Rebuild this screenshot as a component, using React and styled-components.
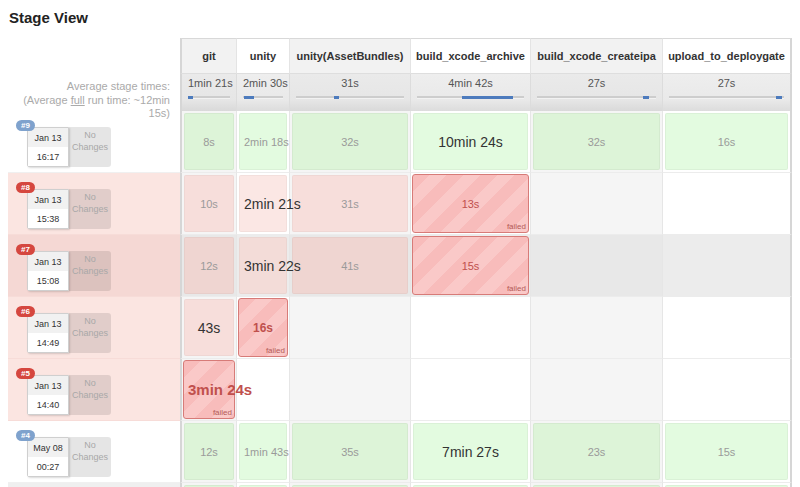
import styled, { createGlobalStyle } from "styled-components";

const GlobalStyle = createGlobalStyle`
  body {
    margin: 0;
    background: #fff;
    font-family: "Liberation Sans", Arial, sans-serif;
    color: #333;
    overflow: hidden;
  }
`;

const COLS = "172px 56px 53px 121px 120px 132px 130px";

const stages = [
  { name: "git", avg: "1min 21s", from: 0, width: 13 },
  { name: "unity", avg: "2min 30s", from: 3, width: 25 },
  { name: "unity(AssetBundles)", avg: "31s", from: 35, width: 5 },
  { name: "build_xcode_archive", avg: "4min 42s", from: 42, width: 48 },
  { name: "build_xcode_createipa", avg: "27s", from: 89, width: 5 },
  { name: "upload_to_deploygate", avg: "27s", from: 93, width: 5 },
];

const builds = [
  {
    id: 9, date: "Jan 13", time: "16:17", status: "ok",
    cells: [{ t: "8s" }, { t: "2min 18s" }, { t: "32s" }, { t: "10min 24s", size: 14 }, { t: "32s" }, { t: "16s" }],
  },
  {
    id: 8, date: "Jan 13", time: "15:38", status: "fail",
    cells: [{ t: "10s" }, { t: "2min 21s", size: 14 }, { t: "31s" }, { t: "13s", fail: true }, null, null],
  },
  {
    id: 7, date: "Jan 13", time: "15:08", status: "fail", hover: true,
    cells: [{ t: "12s" }, { t: "3min 22s", size: 14 }, { t: "41s" }, { t: "15s", fail: true }, null, null],
  },
  {
    id: 6, date: "Jan 13", time: "14:49", status: "fail",
    cells: [{ t: "43s", size: 14 }, { t: "16s", fail: true, size: 12 }, null, null, null, null],
  },
  {
    id: 5, date: "Jan 13", time: "14:40", status: "fail",
    cells: [{ t: "3min 24s", fail: true, size: 15 }, null, null, null, null, null],
  },
  {
    id: 4, date: "May 08", time: "00:27", status: "ok",
    cells: [{ t: "12s" }, { t: "1min 43s" }, { t: "35s" }, { t: "7min 27s", size: 14 }, { t: "23s" }, { t: "15s" }],
  },
];

// the next build row only peeks in at the bottom edge
const nextRow = [1, 2, 3, 4, 5, 6];

const isGray = (col) => col % 2 === 0;

const colBg = (col, hover) => {
  if (hover) return isGray(col) ? "#e8e8e8" : "#ececec";
  return isGray(col) ? "#f5f5f5" : "#ffffff";
};

const boxBg = (kind, col, hover) => {
  if (kind === "ok") return isGray(col) ? "#ddf4d8" : "#e3fbe0";
  if (kind === "okf") {
    if (hover) return isGray(col) ? "#efd5d1" : "#f3dcd8";
    return isGray(col) ? "#f7dedb" : "#fbe7e4";
  }
  return "transparent";
};

const Page = styled.div`
  width: 800px;
  height: 487px;
  overflow: hidden;
`;

const Title = styled.h2`
  margin: 9px 0 0 9px;
  font-size: 15px;
  line-height: 18px;
  font-weight: bold;
  color: #222;
`;

const Table = styled.div`
  margin: 11px 0 0 8px;
`;

const Row = styled.div`
  display: grid;
  grid-template-columns: ${COLS};
`;

const Blank = styled.div`
  background: #fff;
`;

const HeadCell = styled.div`
  height: 36px;
  box-sizing: border-box;
  display: flex;
  align-items: center;
  justify-content: center;
  font-size: 11px;
  font-weight: bold;
  color: #333;
  white-space: nowrap;
  background: ${(p) => (isGray(p.$col) ? "#f2f2f2" : "#fff")};
  border-top: 1px solid #d8d8d8;
  border-left: ${(p) => (p.$col === 0 ? "2px solid #d6d6d6" : "1px solid #e4e4e4")};
  border-right: ${(p) => (p.$col === 5 ? "2px solid #d6d6d6" : "none")};
  border-bottom: 1px solid #dedede;
`;

const AvgLabel = styled.div`
  position: relative;
  z-index: 1;
  height: 37px;
  box-sizing: border-box;
  padding: 6px 10px 0 0;
  text-align: right;
  font-size: 11px;
  line-height: 13.5px;
  color: #aaa;

  u {
    text-decoration: underline;
  }
`;

const AvgCell = styled.div`
  height: 37px;
  box-sizing: border-box;
  padding: 3px 6px 0;
  text-align: center;
  white-space: nowrap;
  font-size: 11px;
  line-height: 13px;
  color: #555;
  background: ${(p) =>
    isGray(p.$col)
      ? "linear-gradient(#eaeaea, #e6e6e6 70%, #d9d9d9)"
      : "linear-gradient(#eeeeee, #e9e9e9 70%, #dcdcdc)"};
  border-left: ${(p) => (p.$col === 0 ? "2px solid #d6d6d6" : "1px solid #dcdcdc")};
  border-right: ${(p) => (p.$col === 5 ? "2px solid #d6d6d6" : "none")};
`;

const Track = styled.div`
  display: flex;
  align-items: center;
  height: 2px;
  margin-top: 6px;
  background: #cdcdcd;
  border-bottom: 1px solid #f2f2f2;
`;

const Fill = styled.div`
  height: 3px;
  margin-left: ${(p) => p.$from}%;
  width: ${(p) => p.$width}%;
  background: #4d7bbd;
`;

const BuildCell = styled.div`
  height: 62px;
  box-sizing: border-box;
  padding: 16px 0 0 19px;
  background: ${(p) =>
    p.$status === "fail" ? (p.$hover ? "#f5d8d4" : "#fbe5e1") : p.$status === "next" ? "#efefef" : "#fff"};
  border-bottom: 1px solid ${(p) => (p.$status === "fail" ? "#f7dcd8" : "#f0f0f0")};
`;

const Card = styled.div`
  position: relative;
  display: flex;
  width: 84px;
  height: 40px;
`;

const Badge = styled.span`
  position: absolute;
  left: -11px;
  top: -7px;
  width: 19px;
  height: 11px;
  border-radius: 6px;
  background: ${(p) => (p.$status === "fail" ? "#d5473f" : "#7fa2cd")};
  color: #fff;
  font-size: 8px;
  font-weight: bold;
  line-height: 11px;
  text-align: center;
`;

const DateBox = styled.div`
  width: 42px;
  box-sizing: border-box;
  display: flex;
  flex-direction: column;
  background: #fff;
  border: 1px solid #cfcfcf;
  border-radius: 2px 0 0 2px;
  box-shadow: 1px 1px 2px rgba(0, 0, 0, 0.15);
  font-size: 9px;
  color: #333;
`;

const DatePart = styled.div`
  flex: 1;
  display: flex;
  align-items: center;
  justify-content: center;
  background: ${(p) => (p.$top ? "#f1f1f1" : "#fff")};
`;

const Changes = styled.div`
  width: 42px;
  box-sizing: border-box;
  padding-top: 2px;
  background: rgba(0, 0, 0, 0.1);
  border-radius: 0 3px 3px 0;
  font-size: 9px;
  line-height: 12px;
  color: #a8a8a8;
  text-align: center;
`;

const StageCol = styled.div`
  height: 62px;
  box-sizing: border-box;
  padding: 2px;
  background: ${(p) => colBg(p.$col, p.$hover)};
  border-left: ${(p) => (p.$col === 0 ? "2px solid #d6d6d6" : "1px solid #e6e6e6")};
  border-right: ${(p) => (p.$col === 5 ? "2px solid #d6d6d6" : "none")};
  border-bottom: 1px solid #ececec;
`;

const Box = styled.div`
  height: 100%;
  box-sizing: border-box;
  display: flex;
  align-items: center;
  padding: 0 4px;
  background: ${(p) => boxBg(p.$kind, p.$col, p.$hover)};
  border: 1px solid ${(p) => (p.$kind === "ok" ? "rgba(0,0,0,0.04)" : "rgba(0,0,0,0.03)")};
  border-radius: 2px;
`;

const Duration = styled.div`
  position: relative;
  z-index: 1;
  width: 100%;
  text-align: center;
  white-space: nowrap;
  font-size: ${(p) => (p.$size ? p.$size : 11)}px;
  color: ${(p) => (p.$size ? "#333" : "#9a9a9a")};
`;

const FailBox = styled.div`
  position: relative;
  height: calc(100% + 2px);
  margin: -1px;
  box-sizing: border-box;
  display: flex;
  align-items: center;
  padding: 0 4px;
  border: 1px solid #d77b78;
  border-radius: 3px;
  background: repeating-linear-gradient(
    135deg,
    #f8bcbb 0 12px,
    #fac9c8 12px 24px
  );
`;

const FailText = styled.div`
  position: relative;
  z-index: 1;
  width: 100%;
  text-align: center;
  white-space: nowrap;
  font-size: ${(p) => (p.$size ? p.$size : 11)}px;
  font-weight: ${(p) => (p.$size ? "bold" : "normal")};
  color: #c0504d;
`;

const FailedTag = styled.span`
  position: absolute;
  right: 2px;
  bottom: 1px;
  font-size: 8px;
  color: #b55a57;
`;

const StageCell = ({ cell, col, hover, status }) => {
  if (!cell) return <StageCol $col={col} $hover={hover} />;
  if (cell.fail) {
    return (
      <StageCol $col={col} $hover={hover}>
        <FailBox>
          <FailText $size={cell.size}>{cell.t}</FailText>
          <FailedTag>failed</FailedTag>
        </FailBox>
      </StageCol>
    );
  }
  return (
    <StageCol $col={col} $hover={hover}>
      <Box $kind={status === "fail" ? "okf" : "ok"} $col={col} $hover={hover}>
        {cell.t && <Duration $size={cell.size}>{cell.t}</Duration>}
      </Box>
    </StageCol>
  );
};

const App = () => {
  return (
    <Page>
      <GlobalStyle />
      <Title>Stage View</Title>
      <Table>
        <Row>
          <Blank />
          {stages.map((s, i) => (
            <HeadCell key={s.name} $col={i}>{s.name}</HeadCell>
          ))}
        </Row>
        <Row>
          <AvgLabel>
            Average stage times:
            <br />
            (Average <u>full</u> run time: ~12min 15s)
          </AvgLabel>
          {stages.map((s, i) => (
            <AvgCell key={s.name} $col={i}>
              {s.avg}
              <Track>
                <Fill $from={s.from} $width={s.width} />
              </Track>
            </AvgCell>
          ))}
        </Row>
        {builds.map((b) => (
          <Row key={b.id}>
            <BuildCell $status={b.status} $hover={b.hover}>
              <Card>
                <Badge $status={b.status}>#{b.id}</Badge>
                <DateBox>
                  <DatePart $top>{b.date}</DatePart>
                  <DatePart>{b.time}</DatePart>
                </DateBox>
                <Changes>
                  No
                  <br />
                  Changes
                </Changes>
              </Card>
            </BuildCell>
            {b.cells.map((c, i) => (
              <StageCell key={i} cell={c} col={i} hover={b.hover} status={b.status} />
            ))}
          </Row>
        ))}
        <Row>
          <BuildCell $status="next" />
          {nextRow.map((n, i) => (
            <StageCell key={n} cell={{ t: "" }} col={i} status="ok" />
          ))}
        </Row>
      </Table>
    </Page>
  );
};

export default App;
